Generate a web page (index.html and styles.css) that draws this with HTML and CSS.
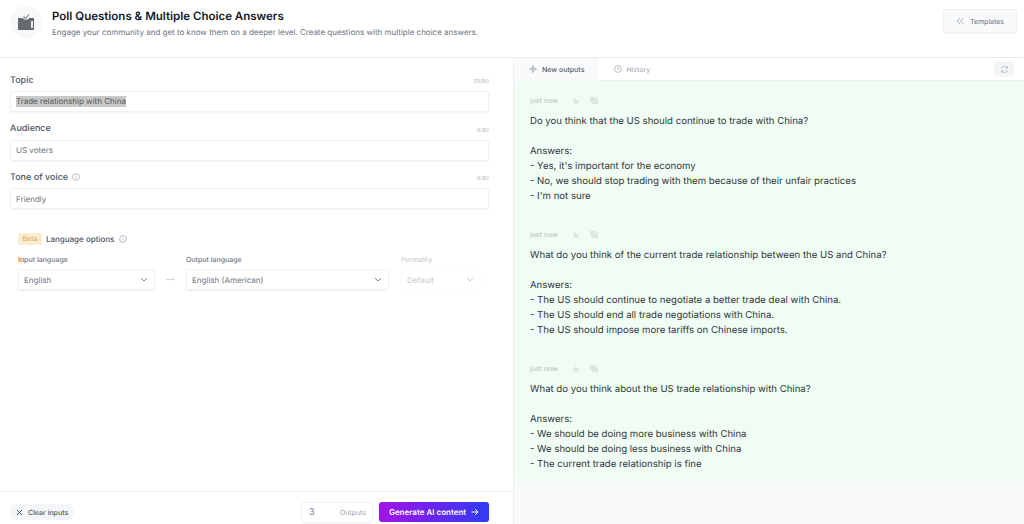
FILE: index.html
```html
<!DOCTYPE html>
<html lang="en">
<head>
<meta charset="utf-8">
<title>Poll Questions &amp; Multiple Choice Answers</title>
<link rel="stylesheet" href="styles.css">
</head>
<body>
<header class="top">
  <div class="logo">
    <svg width="18" height="18" viewBox="0 0 18 18"><path d="M1 5h5l1 1.500h4l1-1.500h5v12H1z" fill="#66696d"/><path d="M6.500 3.500l2 2 3.500-4" fill="none" stroke="#888" stroke-width="1.100"/><rect x="14" y="8" width="2" height="7" fill="#e5e7eb"/></svg>
  </div>
  <div class="heading">
    <h1>Poll Questions &amp; Multiple Choice Answers</h1>
    <p>Engage your community and get to know them on a deeper level. Create questions with multiple choice answers.</p>
  </div>
  <button class="templates">
    <svg width="8" height="8" viewBox="0 0 8 8"><path d="M4 1L1 4l3 3M7.500 1l-3 3 3 3" fill="none" stroke="#9ca3af" stroke-width=".8"/></svg>
    Templates
  </button>
</header>
<main class="split">
  <section class="left">
    <div class="form">
      <div class="field">
        <div class="field-head"><label>Topic</label><span class="count">29/80</span></div>
        <div class="input"><span class="selected">Trade relationship with China</span></div>
      </div>
      <div class="field">
        <div class="field-head"><label>Audience</label><span class="count">9/80</span></div>
        <div class="input">US voters</div>
      </div>
      <div class="field">
        <div class="field-head"><label>Tone of voice <svg class="info" width="8" height="8" viewBox="0 0 8 8"><circle cx="4" cy="4" r="3.400" fill="none" stroke="#9ca3af" stroke-width=".7"/><path d="M4 3.500v2.200M4 2.200v.6" stroke="#9ca3af" stroke-width=".7"/></svg></label><span class="count">9/80</span></div>
        <div class="input">Friendly</div>
      </div>
      <div class="lang">
        <div class="lang-head">
          <span class="beta">Beta</span><span class="lang-title">Language options</span>
          <svg class="info" width="8" height="8" viewBox="0 0 8 8"><circle cx="4" cy="4" r="3.400" fill="none" stroke="#9ca3af" stroke-width=".7"/><path d="M4 3.500v2.200M4 2.200v.6" stroke="#9ca3af" stroke-width=".7"/></svg>
        </div>
        <div class="lang-row">
          <div class="lang-col col-in">
            <span class="mini">Input language</span>
            <div class="select">English<svg width="8" height="5" viewBox="0 0 8 5"><path d="M1 1l3 3 3-3" fill="none" stroke="#6b7280" stroke-width=".9"/></svg></div>
          </div>
          <svg class="arrow" width="9" height="5" viewBox="0 0 9 5"><path d="M0 2.500h8M6.500 1l1.500 1.500L6.500 4" fill="none" stroke="#c4c8ce" stroke-width=".7"/></svg>
          <div class="lang-col col-out">
            <span class="mini">Output language</span>
            <div class="select">English (American)<svg width="8" height="5" viewBox="0 0 8 5"><path d="M1 1l3 3 3-3" fill="none" stroke="#6b7280" stroke-width=".9"/></svg></div>
          </div>
          <div class="lang-col col-form">
            <span class="mini faded">Formality</span>
            <div class="select disabled">Default<svg width="8" height="5" viewBox="0 0 8 5"><path d="M1 1l3 3 3-3" fill="none" stroke="#c4c8ce" stroke-width=".9"/></svg></div>
          </div>
        </div>
      </div>
    </div>
    <footer class="actions">
      <button class="clear"><svg width="7" height="7" viewBox="0 0 7 7"><path d="M1 1l5 5M6 1L1 6" stroke="#4b5563" stroke-width="1"/></svg>Clear inputs</button>
      <div class="outputs"><span class="num">3</span><span class="outputs-label">Outputs</span></div>
      <button class="generate">Generate AI content <svg width="8" height="8" viewBox="0 0 8 8"><path d="M.5 4h6.500M4.200 1.200L7 4 4.200 6.800" fill="none" stroke="#fff" stroke-width="1"/></svg></button>
    </footer>
  </section>
  <section class="right">
    <nav class="tabs">
      <span class="tab active"><svg width="8" height="8" viewBox="0 0 8 8"><path d="M4 0v8M0 4h8M4 1.500L6.500 4 4 6.500 1.500 4z" fill="none" stroke="#8b919a" stroke-width=".6"/></svg>New outputs</span>
      <span class="tab"><svg width="8" height="8" viewBox="0 0 8 8"><circle cx="4" cy="4" r="3.400" fill="none" stroke="#9ca3af" stroke-width=".7"/><path d="M4 2v2.200l1.300.7" fill="none" stroke="#9ca3af" stroke-width=".7"/></svg>History</span>
      <button class="refresh"><svg width="9" height="9" viewBox="0 0 9 9"><path d="M1.500 3.500A3.200 3.200 0 0 1 7.300 3M7.500 5.500A3.200 3.200 0 0 1 1.700 6M7.500 1v2.200H5.300M1.500 8V5.800h2.200" fill="none" stroke="#b4bac2" stroke-width=".8"/></svg></button>
    </nav>
    <div class="results">
      <article class="result">
        <div class="meta"><span>just now</span><svg width="6" height="7" viewBox="0 0 6 7"><path d="M3 .5L1.500 3H.5v3.500h5V3H3.500z" fill="#dfe5e1"/></svg><svg width="8" height="7" viewBox="0 0 8 7"><path d="M0 0h5v1.500h3V7H2V5H0z" fill="#dfe5e1"/></svg></div>
        <p>Do you think that the US should continue to trade with China?<br><br>Answers:<br>- Yes, it's important for the economy<br>- No, we should stop trading with them because of their unfair practices<br>- I'm not sure</p>
      </article>
      <article class="result">
        <div class="meta"><span>just now</span><svg width="6" height="7" viewBox="0 0 6 7"><path d="M3 .5L1.500 3H.5v3.500h5V3H3.500z" fill="#dfe5e1"/></svg><svg width="8" height="7" viewBox="0 0 8 7"><path d="M0 0h5v1.500h3V7H2V5H0z" fill="#dfe5e1"/></svg></div>
        <p>What do you think of the current trade relationship between the US and China?<br><br>Answers:<br>- The US should continue to negotiate a better trade deal with China.<br>- The US should end all trade negotiations with China.<br>- The US should impose more tariffs on Chinese imports.</p>
      </article>
      <article class="result">
        <div class="meta"><span>just now</span><svg width="6" height="7" viewBox="0 0 6 7"><path d="M3 .5L1.500 3H.5v3.500h5V3H3.500z" fill="#dfe5e1"/></svg><svg width="8" height="7" viewBox="0 0 8 7"><path d="M0 0h5v1.500h3V7H2V5H0z" fill="#dfe5e1"/></svg></div>
        <p>What do you think about the US trade relationship with China?<br><br>Answers:<br>- We should be doing more business with China<br>- We should be doing less business with China<br>- The current trade relationship is fine</p>
      </article>
    </div>
  </section>
</main>
</body>
</html>
```
FILE: styles.css
```css
* { box-sizing: border-box; }
html, body { margin: 0; height: 100%; }
body {
  width: 1024px;
  height: 524px;
  overflow: hidden;
  background: #fff;
  color: #374151;
  font-family: Inter, "Liberation Sans", sans-serif;
  text-rendering: geometricPrecision;
  display: flex;
  flex-direction: column;
}
button { font-family: inherit; margin: 0; text-rendering: geometricPrecision; }

.top {
  height: 58px;
  flex: none;
  display: flex;
  align-items: flex-start;
  border-bottom: 1px solid #e9ebee;
  padding: 6px 7px 0 10px;
}
.logo {
  width: 32px;
  height: 32px;
  border-radius: 50%;
  background: #f7f8f9;
  display: flex;
  align-items: center;
  justify-content: center;
  flex: none;
}
.heading { margin-left: 10px; flex: 1; }
.heading h1 {
  margin: 2px 0 0;
  font-size: 11.500px;
  line-height: 16px;
  font-weight: 600;
  color: #111827;
}
.heading p {
  margin: 1px 0 0;
  font-size: 8px;
  line-height: 14px;
  color: #6b7280;
}
.templates {
  width: 74px;
  height: 24px;
  margin-top: 3px;
  background: #f9fafb;
  border: 1px solid #eef0f2;
  border-radius: 3px;
  box-shadow: 0 1px 2px rgba(0,0,0,.04);
  font-size: 7px;
  color: #6b7280;
  display: flex;
  align-items: center;
  justify-content: center;
  gap: 6px;
}

.split { flex: 1; min-height: 0; display: flex; }
.left {
  width: 513px;
  flex: none;
  display: flex;
  flex-direction: column;
}
.form { flex: 1; padding: 13px 24px 0 10px; }
.field { margin-bottom: 7.500px; }
.field-head {
  display: flex;
  justify-content: space-between;
  align-items: center;
  height: 20px;
  padding-bottom: 2px;
}
.field-head label {
  font-size: 9px;
  font-weight: 500;
  color: #4b5563;
  display: flex;
  align-items: center;
  gap: 4px;
}
.info { display: inline-block; }
.count { font-size: 5.500px; color: #b6bbc3; padding-top: 4px; }
.input {
  height: 21px;
  border: 1px solid #f0f1f3;
  border-radius: 2px;
  box-shadow: 0 1px 2px rgba(0,0,0,.05);
  font-size: 8px;
  color: #6b7280;
  display: flex;
  align-items: center;
  padding-left: 5px;
}
.selected { background: #c8c8c8; color: #555; line-height: 11px; }

.lang { padding: 16.500px 0 0 8px; }
.lang-head { display: flex; align-items: center; height: 12px; }
.beta {
  background: #fdedd0;
  color: #dba75a;
  font-size: 7px;
  border-radius: 2px;
  padding: 0 4.500px;
  line-height: 12px;
  margin-right: 4px;
}
.lang-title { font-size: 8px; font-weight: 500; color: #4b5563; margin-right: 5px; }
.lang-row { display: flex; align-items: flex-end; margin-top: 9px; }
.lang-col { display: flex; flex-direction: column; gap: 4px; }
.col-in { width: 137px; }
.col-out { width: 203px; }
.col-form { width: 80px; margin-left: 12px; }
.arrow { margin: 0 11px 8px 11px; flex: none; }
.mini { font-size: 7px; line-height: 11px; font-weight: 500; color: #6b7280; }
.mini.faded { color: #c9cdd3; }
.select {
  height: 21px;
  border: 1px solid #f0f1f3;
  border-radius: 2px;
  box-shadow: 0 1px 2px rgba(0,0,0,.06);
  font-size: 8px;
  color: #6b7280;
  display: flex;
  align-items: center;
  justify-content: space-between;
  padding: 0 6px 0 5px;
}
.select.disabled {
  color: #c4c8ce;
  box-shadow: none;
  border-color: #fcfcfc;
}

.actions {
  height: 33px;
  flex: none;
  border-top: 1px solid #eceef0;
  display: flex;
  align-items: center;
  padding: 8px 24px 0 10px;
}
.clear {
  height: 16px;
  padding: 0 6px;
  background: #f3f5f7;
  border: 0;
  border-radius: 5px;
  font-size: 7px;
  font-weight: 500;
  color: #4b5563;
  display: flex;
  align-items: center;
  gap: 5px;
}
.outputs {
  margin-left: auto;
  width: 72px;
  height: 21px;
  border: 1px solid #f0f1f3;
  border-radius: 3px;
  box-shadow: 0 1px 2px rgba(0,0,0,.04);
  display: flex;
  align-items: center;
  justify-content: space-between;
  padding: 0 6px 0 7px;
}
.num { font-size: 9px; color: #6b7280; }
.outputs-label { font-size: 7px; color: #9ca3af; }
.generate {
  margin-left: 6px;
  width: 110px;
  height: 20px;
  border: 0;
  border-radius: 3px;
  background: linear-gradient(90deg, #a312e8, #2f3cf2);
  color: #fff;
  font-size: 8px;
  font-weight: 600;
  display: flex;
  align-items: center;
  justify-content: center;
  gap: 5px;
}

.right {
  flex: 1;
  min-width: 0;
  border-left: 1px solid #eceef0;
  background: #f9fafb;
  display: flex;
  flex-direction: column;
}
.tabs {
  height: 23px;
  flex: none;
  background: #fff;
  border-bottom: 1px solid #eceef0;
  display: flex;
  align-items: center;
  padding-right: 10px;
}
.tab {
  height: 23px;
  display: flex;
  align-items: center;
  gap: 4px;
  font-size: 7px;
  color: #9ca3af;
  padding: 0 16px;
}
.tab.active {
  background: #f9fafb;
  color: #4b5563;
  font-weight: 500;
  padding: 0 14px 0 15px;
  gap: 5px;
}
.refresh {
  margin-left: auto;
  width: 20px;
  height: 15px;
  background: #f3f5f7;
  border: 0;
  border-radius: 3px;
  padding: 0;
  display: flex;
  align-items: center;
  justify-content: center;
}
.results {
  height: 410px;
  background: linear-gradient(#f0fdf4 0, #f0fdf4 96%, #f9fafb 100%);
  padding: 13px 15px 0 16px;
}
.result { height: 134px; }
.meta {
  display: flex;
  align-items: center;
  height: 12px;
  font-size: 7px;
  color: #b5bbb8;
}
.meta span { width: 43px; }
.meta svg + svg { margin-left: 11px; }
.result p {
  margin: 8px 0 0;
  font-size: 9.600px;
  line-height: 15px;
  color: #2f3640;
}
```
